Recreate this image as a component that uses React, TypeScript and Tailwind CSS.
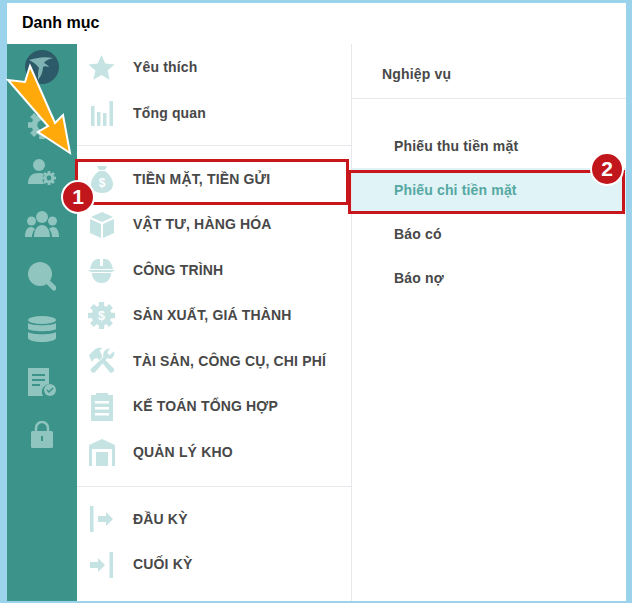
const iconColor = '#c5e3e3';
const railColor = '#8fc4bf';
const railBg = '#3b9389';

function GearShape({ c, cx, cy, r, hole }: { c: string; cx: number; cy: number; r: number; hole?: string }) {
  return (
    <g fill={c}>
      {[0, 45, 90, 135, 180, 225, 270, 315].map((a) => (
        <rect
          key={a}
          x={cx - r * 0.2}
          y={cy - r}
          width={r * 0.4}
          height={r * 0.4}
          transform={`rotate(${a} ${cx} ${cy})`}
        />
      ))}
      <circle cx={cx} cy={cy} r={r * 0.74} />
      {hole && <circle cx={cx} cy={cy} r={r * 0.34} fill={hole} />}
    </g>
  );
}

function Star({ c }: { c: string }) {
  return (
    <svg viewBox="0 0 28 28" className="w-[27px] h-[27px]" fill={c}>
      <path d="M14 1l4 8.800 9.500 1-7.100 6.400 2 9.400L14 21.800l-8.400 4.800 2-9.400L.5 10.800l9.500-1z" />
    </svg>
  );
}

function Bars({ c }: { c: string }) {
  return (
    <svg viewBox="0 0 22 25" className="w-[22px] h-[25px]" fill={c}>
      <rect x="0" y="5" width="3.500" height="20" />
      <rect x="6" y="11" width="3.500" height="14" />
      <rect x="12" y="12" width="3.500" height="13" />
      <rect x="18.500" y="0" width="3.500" height="25" />
    </svg>
  );
}

function MoneyBag({ c }: { c: string }) {
  return (
    <svg viewBox="0 0 22 27" className="w-[22px] h-[27px]">
      <path fill={c} d="M6 0h10l-2 4H8zM8 5h6c4 3 8 8 8 13 0 6-5 9-11 9S0 24 0 18C0 13 4 8 8 5z" />
      <text x="11" y="21" textAnchor="middle" fontSize="12" fontWeight="700" fill="#fff" fontFamily="Liberation Sans, sans-serif">$</text>
    </svg>
  );
}

function Box({ c }: { c: string }) {
  return (
    <svg viewBox="0 0 24 26" className="w-[24px] h-[26px]" fill={c}>
      <path d="M12 0l11 5-11 5L1 5z" />
      <path d="M0 7l11 5v14L0 21z" />
      <path d="M24 7l-11 5v14l11-5z" />
    </svg>
  );
}

function Helmet({ c }: { c: string }) {
  return (
    <svg viewBox="0 0 27 26" className="w-[27px] h-[26px]" fill={c}>
      <path d="M9 2h3v7h3V2h3c4 1 6 5 7 10H2C3 7 5 3 9 2z" />
      <path d="M0 13h27l-3 2H3z" />
      <path d="M4 16h19c0 6-4 10-9.500 10S4 22 4 16z" />
    </svg>
  );
}

function Gear({ c }: { c: string }) {
  return (
    <svg viewBox="0 0 28 28" className="w-[27px] h-[27px]">
      <GearShape c={c} cx={14} cy={14} r={14} />
      <text x="14" y="19" textAnchor="middle" fontSize="13" fontWeight="700" fill="#fff" fontFamily="Liberation Sans, sans-serif">$</text>
    </svg>
  );
}

function Tools({ c }: { c: string }) {
  return (
    <svg viewBox="0 0 28 28" className="w-[27px] h-[28px]" fill={c}>
      <path d="M1 8l6-6c3-2 6-2 8-1l-3 2 2 4 1 3-3 3-3-2-3 1-2 3z" />
      <path d="M13 14l3-3 11 11c1 2-2 5-4 4z" />
      <path d="M27 4c1 4-1 7-4 8l-3-1L7 26c-2 1-5-1-4-4l13-12c-1-4 1-9 7-9l-3 4 2 3z" />
    </svg>
  );
}

function Clipboard({ c }: { c: string }) {
  return (
    <svg viewBox="0 0 22 28" className="w-[22px] h-[28px]">
      <path fill={c} d="M0 2h5V0h12v2h5v26H0z" />
      <path fill="#fff" d="M4 8h14v2.500H4zM4 14h14v2.500H4zM4 20h14v2.500H4z" />
    </svg>
  );
}

function Warehouse({ c }: { c: string }) {
  return (
    <svg viewBox="0 0 26 27" className="w-[26px] h-[27px]">
      <path fill={c} d="M13 0l13 6v21h-3V10H3v17H0V6z" />
      <path fill={c} d="M7 13h12v14H7z" />
    </svg>
  );
}

function ArrowIn({ c }: { c: string }) {
  return (
    <svg viewBox="0 0 23 26" className="w-[23px] h-[26px]" fill={c}>
      <rect x="0" y="0" width="3.500" height="26" />
      <path d="M8 10h8V6l7 7-7 7v-4H8z" />
    </svg>
  );
}

function ArrowOut({ c }: { c: string }) {
  return (
    <svg viewBox="0 0 23 26" className="w-[23px] h-[26px]" fill={c}>
      <rect x="19.500" y="0" width="3.500" height="26" />
      <path d="M0 10h8V6l7 7-7 7v-4H0z" />
    </svg>
  );
}

function Logo() {
  return (
    <svg viewBox="0 0 34 34" className="w-[34px] h-[34px]">
      <circle cx="17" cy="17" r="17" fill="#2d5a68" />
      <path d="M4 10c7-2 15-4 24-2-5 1-8 3-9 5 2 1 4 2 5 4-3-1-5-1-6 0 0 5-2 9-5 13 0-5 0-9 1-12-3-4-6-6-10-8z" fill="#7fb3b3" />
    </svg>
  );
}

function Rail() {
  return (
    <div className="w-[70px] shrink-0 bg-[#3b9389] flex flex-col items-center pt-[6px]">
      <Logo />
      <svg viewBox="0 0 28 28" className="w-[28px] h-[28px] mt-[27px]">
        <GearShape c={railColor} cx={14} cy={14} r={14} hole={railBg} />
      </svg>
      <svg viewBox="0 0 28 26" className="w-[28px] h-[26px] mt-[20px]">
        <circle cx="11" cy="6" r="6" fill={railColor} />
        <path d="M0 25c0-8 4-11 11-11 2 0 4 .5 5 1-2 3-2 7 0 10z" fill={railColor} />
        <GearShape c={railColor} cx={21} cy={19} r={7} hole={railBg} />
      </svg>
      <svg viewBox="0 0 34 26" className="w-[34px] h-[26px] mt-[26px]" fill={railColor}>
        <circle cx="6.500" cy="10" r="4.500" />
        <circle cx="27.500" cy="10" r="4.500" />
        <circle cx="17" cy="6" r="6" />
        <path d="M0 26c0-6 2-10 6-10 2 0 3 1 4 2-2 2-3 5-3 8zM34 26c0-6-2-10-6-10-2 0-3 1-4 2 2 2 3 5 3 8zM9 26c0-7 3-12 8-12s8 5 8 12z" />
      </svg>
      <svg viewBox="0 0 28 29" className="w-[28px] h-[29px] mt-[25px]">
        <circle cx="12" cy="12" r="12" fill={railColor} />
        <path d="M21 21l5 5" stroke={railColor} strokeWidth="5" strokeLinecap="round" />
      </svg>
      <svg viewBox="0 0 28 26" className="w-[28px] h-[26px] mt-[25px]" fill={railColor}>
        <ellipse cx="14" cy="4" rx="14" ry="4" />
        <path d="M0 7c3 3 25 3 28 0v6c-3 3-25 3-28 0zM0 16c3 3 25 3 28 0v6c0 2-6 4-14 4S0 24 0 22z" />
      </svg>
      <svg viewBox="0 0 28 28" className="w-[28px] h-[28px] mt-[26px]">
        <path fill={railColor} d="M0 0h21v16a8 8 0 0 0-6 12H0z" />
        <path stroke={railBg} strokeWidth="2" d="M4 7h13M4 12h13M4 17h8" />
        <circle cx="22" cy="22" r="6" fill={railColor} />
        <path d="M19 22l2 2 4-4" stroke={railBg} strokeWidth="1.500" fill="none" />
      </svg>
      <svg viewBox="0 0 22 27" className="w-[22px] h-[27px] mt-[25px]">
        <path d="M5 12V7a6 6 0 0 1 12 0v5" fill="none" stroke={railColor} strokeWidth="2.500" />
        <rect x="0" y="10" width="22" height="17" rx="1.500" fill={railColor} />
        <rect x="10" y="15" width="2" height="5" fill={railBg} />
      </svg>
    </div>
  );
}

function MenuRow({ icon, label }: { icon: React.ReactNode; label: string }) {
  return (
    <div className="h-[45.5px] flex items-center">
      <div className="w-[49px] mr-[7px] flex justify-center shrink-0">{icon}</div>
      <span className="text-[14px] font-bold text-[#484848] tracking-[0.16px] whitespace-nowrap">{label}</span>
    </div>
  );
}

function SubRow({ label, active }: { label: string; active?: boolean }) {
  return (
    <div
      className={
        active
          ? 'h-[44px] flex items-center pl-[42px] bg-[#e0f3f6] text-[14px] font-bold tracking-[0.16px] text-[#55a8a2]'
          : 'h-[44px] flex items-center pl-[42px] text-[14px] font-bold tracking-[0.16px] text-[#484848]'
      }
    >
      {label}
    </div>
  );
}

function Badge({ n, className }: { n: string; className: string }) {
  return (
    <div
      className={`absolute w-[34px] h-[34px] rounded-full bg-[#c1161c] border-2 border-white flex items-center justify-center text-white text-[21px] font-bold ${className}`}
    >
      {n}
    </div>
  );
}

export default function App() {
  return (
    <div
      className="relative w-[632px] h-[603px] overflow-hidden bg-[#9bd3ec] pt-[3px] pl-[7px] pr-[6px] pb-[2px] flex flex-col"
      style={{ fontFamily: '"Liberation Sans", sans-serif' }}
    >
      <div className="h-[41px] shrink-0 bg-white flex items-center pl-[15px] pb-[2px] text-[16px] font-bold text-black">
        Danh mục
      </div>
      <div className="flex flex-1 min-h-0 bg-white">
        <Rail />
        <div className="w-[275px] shrink-0 pt-[1px] border-r border-[#e8e8ec]">
          <MenuRow icon={<Star c={iconColor} />} label="Yêu thích" />
          <MenuRow icon={<Bars c={iconColor} />} label="Tổng quan" />
          <div className="h-px bg-[#e8e8ec] mt-[9px] mb-[10.5px]" />
          <MenuRow icon={<MoneyBag c={iconColor} />} label="TIỀN MẶT, TIỀN GỬI" />
          <MenuRow icon={<Box c={iconColor} />} label="VẬT TƯ, HÀNG HÓA" />
          <MenuRow icon={<Helmet c={iconColor} />} label="CÔNG TRÌNH" />
          <MenuRow icon={<Gear c={iconColor} />} label="SẢN XUẤT, GIÁ THÀNH" />
          <MenuRow icon={<Tools c={iconColor} />} label="TÀI SẢN, CÔNG CỤ, CHI PHÍ" />
          <MenuRow icon={<Clipboard c={iconColor} />} label="KẾ TOÁN TỔNG HỢP" />
          <MenuRow icon={<Warehouse c={iconColor} />} label="QUẢN LÝ KHO" />
          <div className="h-px bg-[#e8e8ec] mt-[11px] mb-[9.5px]" />
          <MenuRow icon={<ArrowIn c={iconColor} />} label="ĐẦU KỲ" />
          <MenuRow icon={<ArrowOut c={iconColor} />} label="CUỐI KỲ" />
        </div>
        <div className="flex-1">
          <div className="h-[55px] flex items-center pl-[30px] pt-[6px] border-b border-[#e8e8ec] text-[14px] font-bold tracking-[0.16px] text-[#484848]">
            Nghiệp vụ
          </div>
          <div className="pt-[25px]">
            <SubRow label="Phiếu thu tiền mặt" />
            <SubRow label="Phiếu chi tiền mặt" active />
            <SubRow label="Báo có" />
            <SubRow label="Báo nợ" />
          </div>
        </div>
      </div>

      {/* annotation overlays */}
      <div className="absolute left-[75px] top-[159px] w-[274px] h-[46px] border-[3px] border-[#c8161d]" />
      <div className="absolute left-[348px] top-[170px] w-[277px] h-[44px] border-[3px] border-[#c8161d]" />
      <Badge n="1" className="left-[61px] top-[180px]" />
      <Badge n="2" className="left-[590px] top-[152px]" />
      <svg className="absolute left-0 top-0 w-[90px] h-[170px]" viewBox="0 0 90 170">
        <path d="M30 66L55 123 63 115 70 153 38 132 48 126 8 80 25 82z" fill="#ffa90a" stroke="#fff" strokeWidth="2" />
      </svg>
    </div>
  );
}
